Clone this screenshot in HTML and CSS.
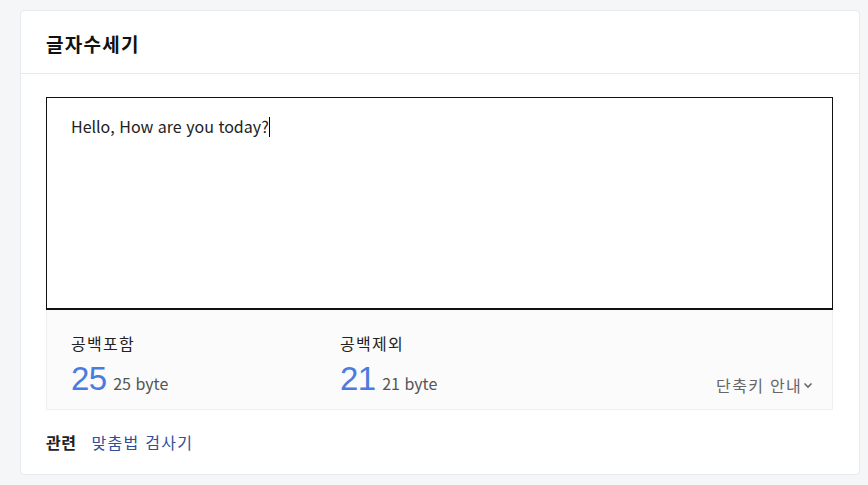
FILE: index.html
```html
<!DOCTYPE html>
<html lang="ko">
  <head>
    <meta charset="UTF-8" />
    <meta name="viewport" content="width=device-width, initial-scale=1.0" />
    <title>글자수세기</title>
    <link rel="stylesheet" href="styles.css">
  </head>
  <body>
    <div class="card">
      <div class="card-header">
        <h1>글자수세기</h1>
      </div>

      <div class="card-body">
        <div class="editor">Hello, How are you today?<span class="caret"></span></div>

        <div class="stats">
          <div class="stat">
            <div class="stat-label">공백포함</div>
            <div class="stat-value"><span class="num">25</span> <span class="bytes">25 byte</span></div>
          </div>
          <div class="stat">
            <div class="stat-label">공백제외</div>
            <div class="stat-value"><span class="num">21</span> <span class="bytes">21 byte</span></div>
          </div>
          <div class="shortcut">
            <span>단축키 안내</span>
            <svg width="10" height="10" viewBox="0 0 10 10">
              <path d="M1.5 3.5 L5 7 L8.5 3.5" fill="none" stroke="#666" stroke-width="1.6" />
            </svg>
          </div>
        </div>

        <div class="related">
          <strong>관련</strong>
          <a href="#">맞춤법 검사기</a>
        </div>
      </div>
    </div>
  </body>
</html>
```

FILE: styles.css
```css
:root {
  --border: 1px solid #e8e9ec;
  --blue: #4a7be0;
}

body {
  margin: 0;
  padding: 10px 8px 10px 20px;
  background: #f5f6f8;
  font-family: "Noto Sans CJK KR", "Noto Sans", sans-serif;
  color: #222;
}

.card {
  width: 838px;
  background: #fff;
  border: var(--border);
  border-radius: 4px;
}

.card-header {
  height: 62px;
  border-bottom: var(--border);
  padding: 0 25px;
  display: flex;
  align-items: center;
}

h1 {
  margin: 0;
  font-size: 19px;
  font-weight: 700;
  letter-spacing: 1.3px;
  color: #111;
  padding-top: 2px;
}

.card-body {
  padding: 23px 26px 0 25px;
}

.editor {
  border: 1px solid #111;
  border-bottom-width: 2px;
  padding: 16px 24px;
  font-size: 16px;
  color: #222;
  box-sizing: border-box;
  height: 213px;
}

.caret {
  display: inline-block;
  width: 1px;
  height: 20px;
  background: #000;
  vertical-align: -4px;
}

.stats {
  height: 100px;
  box-sizing: border-box;
  background: #fbfbfb;
  border: 1px solid #eeeff1;
  border-top: 0;
  padding: 21px 24px 0 24px;
  display: flex;
}

.stat {
  width: 269px;
}

.stat-label {
  font-size: 16px;
  letter-spacing: 1.3px;
  color: #222;
  line-height: 24px;
}

.stat-value {
  margin-top: 4px;
  line-height: 40px;
}

.num {
  font-family: "Liberation Sans", sans-serif;
  font-size: 33px;
  color: var(--blue);
  letter-spacing: -0.5px;
}

.bytes {
  font-size: 16px;
  color: #555;
  margin-left: 2px;
}

.shortcut {
  margin-left: auto;
  align-self: flex-end;
  margin-bottom: 12px;
  margin-right: -5px;
  font-size: 16px;
  letter-spacing: 1.3px;
  color: #666;
  display: flex;
  align-items: center;
  gap: 1px;
}

.related {
  height: 64px;
  display: flex;
  align-items: center;
  gap: 15px;
  font-size: 16px;
  letter-spacing: 1.3px;
}

.related strong {
  color: #222;
  letter-spacing: 0.5px;
}

.related a {
  color: #2f4f9e;
  text-decoration: none;
}
```
